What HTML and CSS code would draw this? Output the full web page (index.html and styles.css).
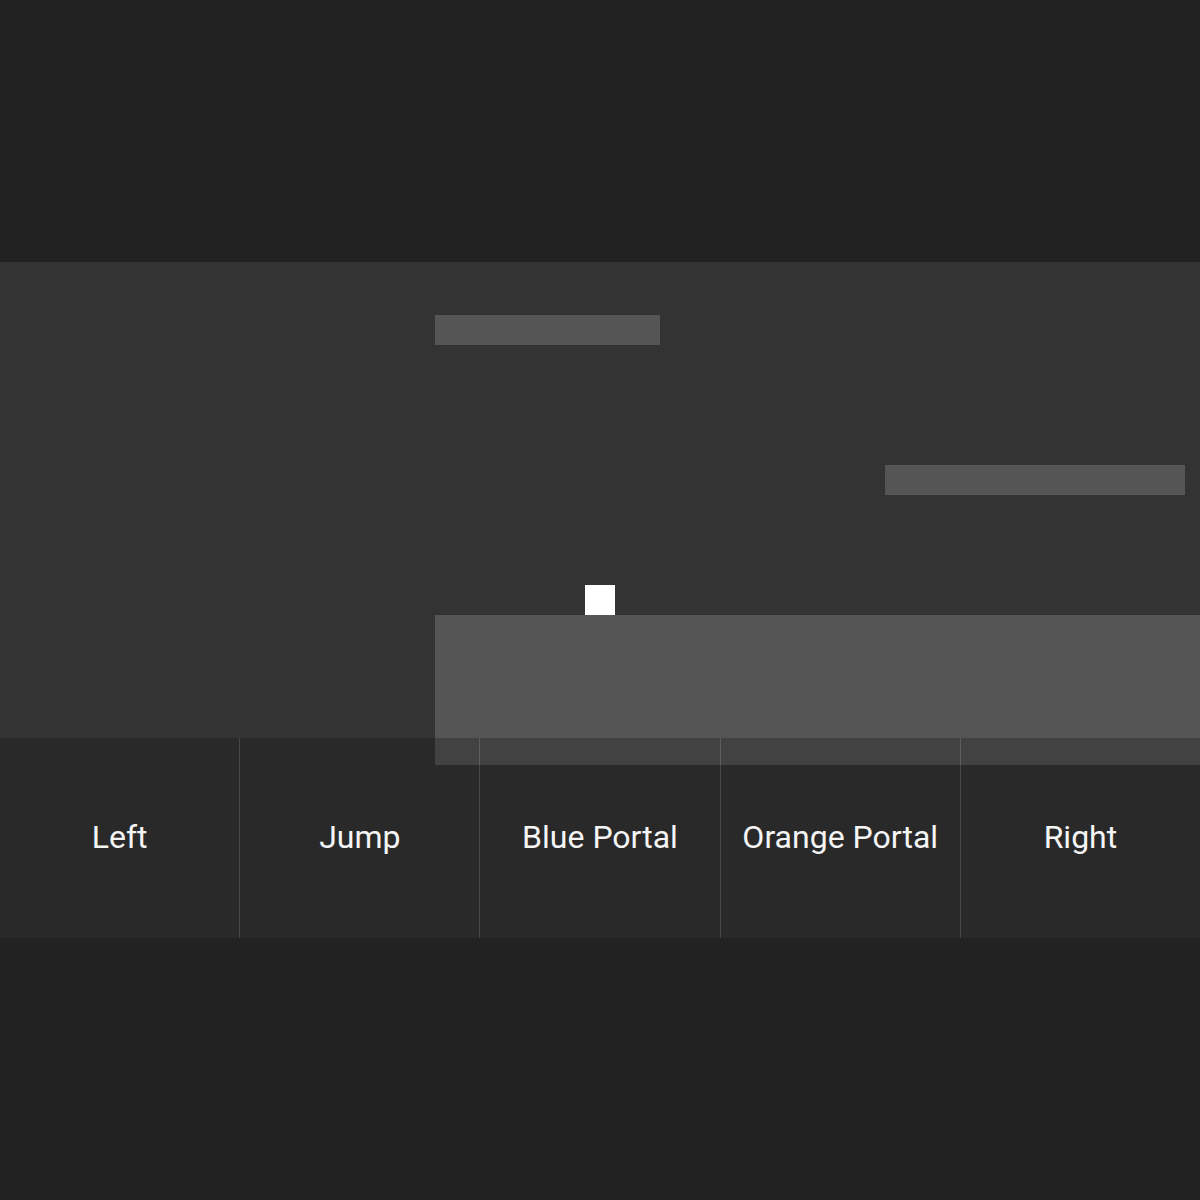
FILE: index.html
```html
<!DOCTYPE html>
<html>
<head>
  <title>Portal Runner</title>
  <link rel="stylesheet" href="styles.css">
</head>
<body>
  <div class="game">
    <div class="stage">
      <div class="platform p1"></div>
      <div class="platform p2"></div>
      <div class="platform ground"></div>
      <div class="player"></div>
    </div>
    <div class="controls">
      <button class="ctrl">Left</button>
      <button class="ctrl">Jump</button>
      <button class="ctrl">Blue Portal</button>
      <button class="ctrl">Orange Portal</button>
      <button class="ctrl">Right</button>
    </div>
  </div>
</body>
</html>
```

FILE: styles.css
```css
html, body {
  height: 100%;
}
body {
  margin: 0;
  background: #222;
  color: #fff;
  font-family: Roboto, "Liberation Sans", sans-serif;
  display: flex;
  flex-direction: column;
  justify-content: center;
}
.game {
  display: flex;
  flex-direction: column;
}
.stage {
  position: relative;
  height: 476px;
  background: #333;
}
.platform {
  position: absolute;
  background: #555;
}
.p1 {
  left: 435px;
  top: 53px;
  width: 225px;
  height: 30px;
}
.p2 {
  left: 885px;
  top: 203px;
  width: 300px;
  height: 30px;
}
.ground {
  left: 435px;
  top: 353px;
  width: 765px;
  height: 150px;
}
.player {
  position: absolute;
  left: 585px;
  top: 323px;
  width: 30px;
  height: 30px;
  background: #fff;
}
.controls {
  position: relative;
  z-index: 1;
  display: flex;
  height: 200px;
}
.ctrl {
  flex: 1;
  margin: 0;
  padding: 0 0 2px;
  border: none;
  background: rgba(48, 48, 48, 0.5);
  color: #f5f5f5;
  font-family: inherit;
  font-size: 32px;
  cursor: pointer;
}
.ctrl + .ctrl {
  border-left: 1px solid rgba(255, 255, 255, 0.14);
}
```
